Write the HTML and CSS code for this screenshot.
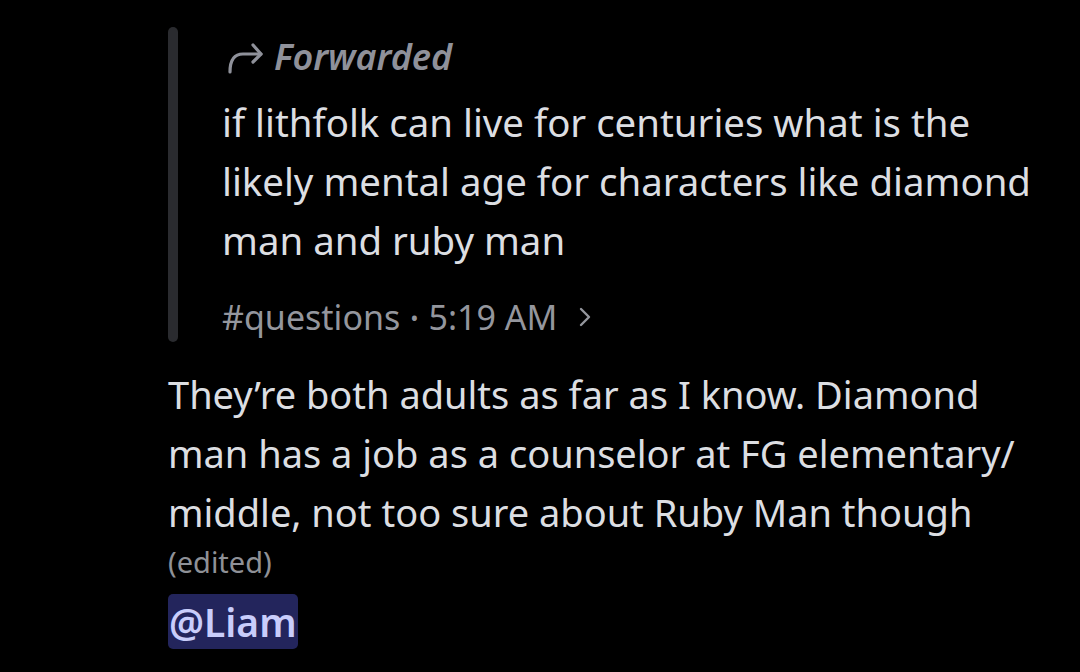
FILE: index.html
```html
<!DOCTYPE html>
<html lang="en">
<head>
  <meta charset="UTF-8">
  <meta name="viewport" content="width=device-width, initial-scale=1.0">
  <title>Message</title>
  <link rel="stylesheet" href="styles.css">
</head>
<body>
  <div class="message">
    <div class="forward">
      <span class="forward-bar"></span>
      <div class="forward-body">
        <div class="forward-label">
          <svg class="forward-icon" width="36" height="36" viewBox="0 0 36 36">
            <path d="M2 34 C2 23 6 16 15 16 L33 16" fill="none" stroke="currentColor" stroke-width="3.2" stroke-linecap="round"/>
            <path d="M25 7 L33 16 L25 24" fill="none" stroke="currentColor" stroke-width="3.2" stroke-linecap="round" stroke-linejoin="round"/>
          </svg>
          <span>Forwarded</span>
        </div>
        <p class="forward-text">if lithfolk can live for centuries what is the<br>likely mental age for characters like diamond<br>man and ruby man</p>
        <div class="forward-meta">
          <span>#questions</span>
          <span class="dot">•</span>
          <span>5:19 AM</span>
          <svg class="chevron" width="12" height="20" viewBox="0 0 12 20">
            <path d="M2 2 L10 10 L2 18" fill="none" stroke="currentColor" stroke-width="2.4" stroke-linecap="round" stroke-linejoin="round"/>
          </svg>
        </div>
      </div>
    </div>
    <p class="text">They’re both adults as far as I know. Diamond<br>man has a job as a counselor at FG elementary/<br>middle, not too sure about Ruby Man though</p>
    <div class="edited">(edited)</div>
    <div class="mentions"><span class="mention">@Liam</span></div>
  </div>
</body>
</html>
```

FILE: styles.css
```css
body {
  margin: 0;
  background: #000;
  font-family: "Noto Sans", "Open Sans", sans-serif;
  color: #dcdee2;
}
.message {
  padding: 27px 0 0 168px;
}
.forward {
  display: flex;
}
.forward-bar {
  width: 10px;
  height: 315px;
  border-radius: 5px;
  background: #2a2b2f;
  flex-shrink: 0;
}
.forward-body {
  padding-left: 44px;
}
.forward-label {
  display: flex;
  align-items: center;
  gap: 10px;
  height: 66px;
  padding-bottom: 8px;
  box-sizing: border-box;
  color: #8f919a;
  font-size: 36px;
  font-style: italic;
  font-weight: 600;
}
.forward-icon {
  margin-left: 6px;
}
.forward-text {
  margin: 0;
  font-size: 38.4px;
  line-height: 59px;
}
.forward-meta {
  display: flex;
  align-items: center;
  height: 50px;
  margin-top: 22px;
  color: #94969d;
  font-size: 34px;
}
.forward-meta .dot {
  margin: 0 10px;
  font-size: 22px;
}
.chevron {
  margin-left: 22px;
}
.text {
  margin: 23px 0 0;
  font-size: 38px;
  line-height: 59px;
}
.edited {
  color: #8f9197;
  font-size: 29px;
  line-height: 40px;
}
.mentions {
  margin-top: 12px;
}
.mention {
  display: inline-block;
  background: #23255c;
  color: #c9cdfb;
  font-size: 39px;
  font-weight: 600;
  line-height: 55px;
  border-radius: 5px;
  padding: 0 1px;
}
```
